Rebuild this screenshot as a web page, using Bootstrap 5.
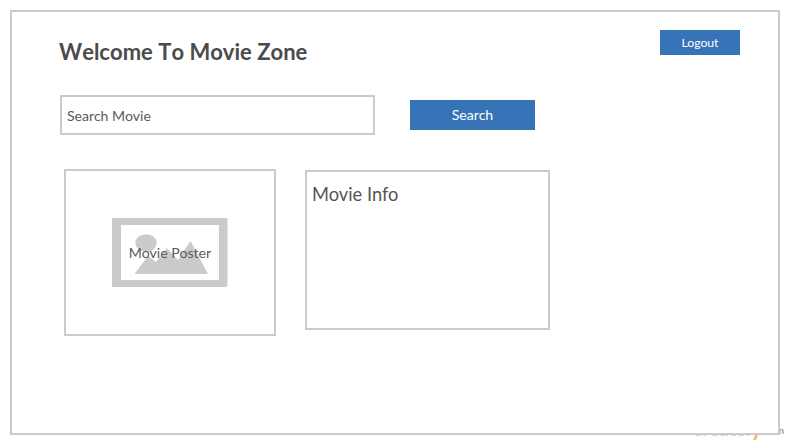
<!DOCTYPE html>
<html lang="en">
<head>
<meta charset="utf-8">
<meta name="viewport" content="width=device-width, initial-scale=1">
<title>Movie Zone</title>
<link href="https://cdn.jsdelivr.net/npm/bootstrap@5.3.0/dist/css/bootstrap.min.css" rel="stylesheet">
<style>
  body { font-family: Lato, sans-serif; color: #4b4b4b; padding: 10px; height: 445px; overflow: hidden; background: #fff; }
  .outlined { border: 2px solid #cbcbcb; background: #fff; }
  .screen { width: 770px; height: 425px; z-index: 1; padding: 18px 38px 0 48px; }
  .headline { font-size: 22px; letter-spacing: .01px; font-kerning: none; line-height: 28px; font-weight: 700; margin: 8px 0 0 -1px; }
  .btn-flat { background: #3673b7; color: #fff; border: 0; border-radius: 0; padding: 0; }
  .btn-flat:hover { background: #2d629d; color: #fff; }
  .btn-logout { width: 80px; height: 25px; font-size: 12.2px; line-height: 25px; }
  .btn-search { width: 125px; height: 30px; font-size: 14.1px; line-height: 30px; }
  .search-row { margin-top: 29px; gap: 35px; }
  .search-field { width: 315px; height: 40px; border-radius: 0; padding: 0 5px; font-size: 14.1px; line-height: 20px; color: #4b4b4b; }
  .search-field::placeholder { color: #5a5a5a; opacity: 1; }
  .panels { margin: 34px 0 0 4px; gap: 29px; }
  .poster { width: 212px; height: 167px; font-size: 14.15px; line-height: 20px; }
  .poster-art { grid-area: 1 / 1; }
  .poster-label { grid-area: 1 / 1; color: #5a5a5a; }
  .info { width: 245px; height: 160px; margin-top: 1px; padding: 10px 5px; }
  .info h2 { font-size: 18.3px; line-height: 24px; font-weight: 400; margin: 0; color: #555; }
  .watermark { position: absolute; left: 693px; top: 416px; line-height: 26px; font-size: 19px; font-weight: 700; color: #b9d4ea; white-space: nowrap; }
  .watermark .tail { color: #f9b668; font-size: 23px; line-height: 0; }
  .watermark .tld { position: absolute; left: 70px; top: 1px; font-size: 10px; font-weight: 400; color: #777; }
</style>
</head>
<body class="position-relative">
  <div class="watermark">createl<span class="tail">y</span><span class="tld">.com</span></div>
  <main class="screen outlined position-relative">
    <header class="d-flex justify-content-between align-items-start">
      <h1 class="headline">Welcome To Movie Zone</h1>
      <button type="button" class="btn btn-flat btn-logout">Logout</button>
    </header>
    <form class="search-row d-flex align-items-center">
      <input type="text" class="form-control search-field outlined" placeholder="Search Movie" aria-label="Search Movie">
      <button type="button" class="btn btn-flat btn-search">Search</button>
    </form>
    <div class="panels d-flex align-items-start">
      <section class="poster outlined d-grid align-items-center justify-content-center">
        <svg class="poster-art" width="116" height="70" viewBox="0 0 116 70" fill="#cbcbcb" aria-hidden="true">
          <path fill-rule="evenodd" d="M0 0H115.500V67.500L114 69H0ZM9 7V62H107V7Z"/>
          <ellipse cx="34" cy="25" rx="10.7" ry="8.7"/>
          <path d="M22.500 56L36 38L44 44L55 30L66 42L78.500 23L96 56Z"/>
        </svg>
        <span class="poster-label text-center">Movie Poster</span>
      </section>
      <section class="info outlined">
        <h2>Movie Info</h2>
      </section>
    </div>
  </main>
<script src="https://cdn.jsdelivr.net/npm/bootstrap@5.3.0/dist/js/bootstrap.bundle.min.js"></script>
</body>
</html>
